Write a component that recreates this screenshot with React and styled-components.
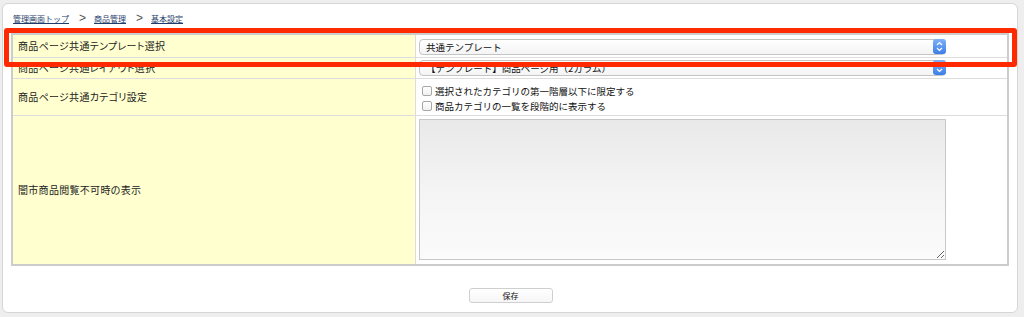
import React from "react";
import styled, { createGlobalStyle } from "styled-components";

const GlobalStyle = createGlobalStyle`
html, body {
  margin: 0;
  padding: 0;
  background-color: #eeeeee;
}
body {
  font-family: "Liberation Sans", "Noto Sans CJK JP", sans-serif;
  color: #333333;
}
`;

//Page wrapper
const Page = styled.div`
position: relative;
width: 1024px;
height: 317px;
padding: 3px 6px 0 2px;
box-sizing: border-box;
`;

const Panel = styled.div`
background-color: #FFFFFF;
border: 1px solid #d6d6d6;
border-radius: 6px;
height: 310px;
box-sizing: border-box;
padding: 8px 7px 0 8px;
display: flex;
flex-direction: column;
`;

//Breadcrumb
const Breadcrumb = styled.div`
display: flex;
align-items: center;
height: 12px;
padding-left: 2px;
margin-bottom: 9px;
font-family: "Noto Sans CJK JP", sans-serif;
font-size: 8px;
`;

const Crumb = styled.a`
color: #1f3d6c;
text-decoration: underline;
`;

const Sep = styled.span`
color: #555555;
font-family: "Liberation Sans", sans-serif;
font-size: 12px;
margin: 0 8px 0 10px;
`;

//Settings table
const Table = styled.table`
width: 998px;
border-collapse: collapse;
border: 2px solid #cccccc;
font-family: "Noto Sans CJK JP", sans-serif;
font-size: 10px;
`;

const Row = styled.tr`
height: ${(p) => p.h}px;
border-top: 1px solid #dddddd;
`;

const Label = styled.td`
width: 397px;
background-color: #ffffcf;
border-right: 1px solid #dddddd;
padding: 0 0 0 5px;
vertical-align: middle;
color: #222222;
font-feature-settings: "palt";
letter-spacing: 0.3px;
`;

const Value = styled.td`
padding: ${(p) => p.pad || "0 0 0 3px"};
vertical-align: ${(p) => p.valign || "middle"};
background-color: #FFFFFF;
`;

const SelectBox = styled.div`
width: 527px;
height: 16px;
box-sizing: border-box;
border: 1px solid #c4c4c4;
border-radius: 4px;
background: linear-gradient(#ffffff, #f4f4f4);
display: flex;
align-items: center;
justify-content: space-between;
padding-left: 6px;
font-size: 9.5px;
color: #111111;
`;

const SelectArrow = styled.span`
width: 13px;
height: 15px;
margin-right: -1px;
border-radius: 3px;
background: linear-gradient(#7eb1f7, #3c7de9);
display: flex;
align-items: center;
justify-content: center;
`;

const CheckList = styled.div`
display: flex;
flex-direction: column;
gap: 4px;
`;

const CheckRow = styled.label`
display: flex;
align-items: center;
gap: 3px;
font-size: 9.5px;
color: #111111;
line-height: 11px;
`;

const Box = styled.span`
width: 8px;
height: 8px;
border: 1px solid #a8a8a8;
border-radius: 2px;
background: linear-gradient(#ffffff, #f0f0f0);
margin-left: 3px;
`;

const TextArea = styled.textarea`
display: block;
width: 527px;
height: 141px;
box-sizing: border-box;
border: 1px solid #c8c8c8;
border-radius: 0;
background: linear-gradient(#e9e9e9, #f4f4f4 50%, #fbfbfb);
margin: 0;
`;

//Footer
const Footer = styled.div`
display: flex;
justify-content: center;
padding-top: 22px;
`;

const SaveButton = styled.button`
width: 84px;
height: 15px;
padding: 0;
border: 1px solid #cfcfcf;
border-radius: 3px;
background: linear-gradient(#ffffff, #f6f6f6);
font-family: "Noto Sans CJK JP", sans-serif;
font-size: 8px;
color: #111111;
line-height: 13px;
`;

//Annotation
const Highlight = styled.div`
position: absolute;
left: 4px;
top: 28px;
width: 1013px;
height: 39px;
box-sizing: border-box;
border: 5px solid #ff2a00;
border-radius: 3px;
`;

const Arrow = () => (
  <SelectArrow>
    <svg width="7" height="11" viewBox="0 0 7 11">
      <path d="M1 4 L3.5 1.5 L6 4" fill="none" stroke="#fff" strokeWidth="1.2" />
      <path d="M1 7 L3.5 9.5 L6 7" fill="none" stroke="#fff" strokeWidth="1.2" />
    </svg>
  </SelectArrow>
);

export default function App() {
  return (
    <Page>
      <GlobalStyle />
      <Panel>
        <Breadcrumb>
          <Crumb>管理画面トップ</Crumb>
          <Sep>&gt;</Sep>
          <Crumb>商品管理</Crumb>
          <Sep>&gt;</Sep>
          <Crumb>基本設定</Crumb>
        </Breadcrumb>
        <Table>
          <tbody>
            <Row h={23}>
              <Label>商品ページ共通テンプレート選択</Label>
              <Value pad="2px 0 0 3px">
                <SelectBox>
                  共通テンプレート
                  <Arrow />
                </SelectBox>
              </Value>
            </Row>
            <Row h={21}>
              <Label>商品ページ共通レイアウト選択</Label>
              <Value>
                <SelectBox>
                  【テンプレート】商品ページ用（2カラム）
                  <Arrow />
                </SelectBox>
              </Value>
            </Row>
            <Row h={37}>
              <Label>商品ページ共通カテゴリ設定</Label>
              <Value pad="7px 0 0 3px" valign="top">
                <CheckList>
                  <CheckRow>
                    <Box />
                    選択されたカテゴリの第一階層以下に限定する
                  </CheckRow>
                  <CheckRow>
                    <Box />
                    商品カテゴリの一覧を段階的に表示する
                  </CheckRow>
                </CheckList>
              </Value>
            </Row>
            <Row h={150}>
              <Label>闇市商品閲覧不可時の表示</Label>
              <Value pad="3px 0 4px 3px" valign="top">
                <TextArea />
              </Value>
            </Row>
          </tbody>
        </Table>
        <Footer>
          <SaveButton>保存</SaveButton>
        </Footer>
      </Panel>
      <Highlight />
    </Page>
  );
}
